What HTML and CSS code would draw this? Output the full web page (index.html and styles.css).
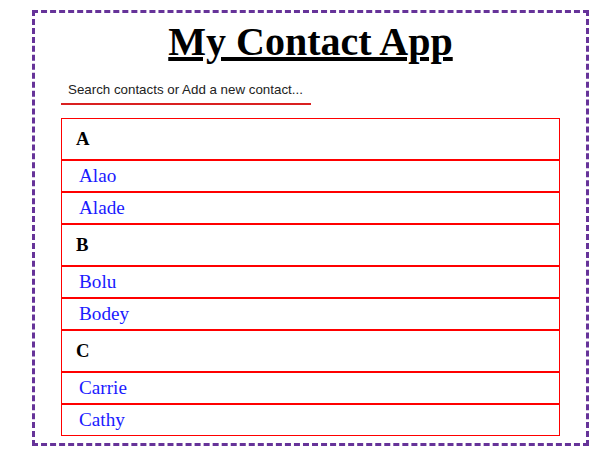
FILE: index.html
```html
<!DOCTYPE html>
<html lang="en">
<head>
<meta charset="utf-8">
<title>My Contact App</title>
<link rel="stylesheet" href="styles.css">
</head>
<body>
<div class="app">
  <h1 class="title">My Contact App</h1>
  <input class="search" type="text" placeholder="Search contacts or Add a new contact...">
  <ul class="contacts">
    <li class="group">A</li>
    <li class="contact">Alao</li>
    <li class="contact">Alade</li>
    <li class="group">B</li>
    <li class="contact">Bolu</li>
    <li class="contact">Bodey</li>
    <li class="group">C</li>
    <li class="contact">Carrie</li>
    <li class="contact">Cathy</li>
  </ul>
</div>
</body>
</html>
```
FILE: styles.css
```css
html, body {
  margin: 0;
  padding: 0;
  background: #ffffff;
}

body {
  font-family: "Liberation Serif", "Times New Roman", serif;
}

.app {
  margin: 10px 20px 0 32px;
  border: 3px dashed #663399;
  padding: 6px 26px 7px;
}

.title {
  margin: 0 0 10px;
  font-size: 40px;
  line-height: 46px;
  font-weight: bold;
  text-align: center;
  text-decoration: underline;
  color: #000;
}

.search {
  display: block;
  box-sizing: border-box;
  width: 250px;
  height: 30px;
  margin: 0;
  padding: 0 7px;
  border: none;
  border-bottom: 2px solid #d92020;
  outline: none;
  background: transparent;
  font-family: "Liberation Sans", Arial, sans-serif;
  font-size: 13.333px;
  color: #222;
}

.search::placeholder {
  color: #222;
  opacity: 1;
}

.contacts {
  list-style: none;
  margin: 13px 0 0;
  padding: 0;
}

.contacts li {
  border: 1px solid #ff0000;
}

.group {
  height: 40px;
  line-height: 40px;
  padding: 0 14px;
  font-size: 18.72px;
  font-weight: bold;
  color: #000;
}

.contact {
  height: 30px;
  line-height: 30px;
  padding: 0 17px;
  font-size: 19.2px;
  color: #1a1aff;
}
```
